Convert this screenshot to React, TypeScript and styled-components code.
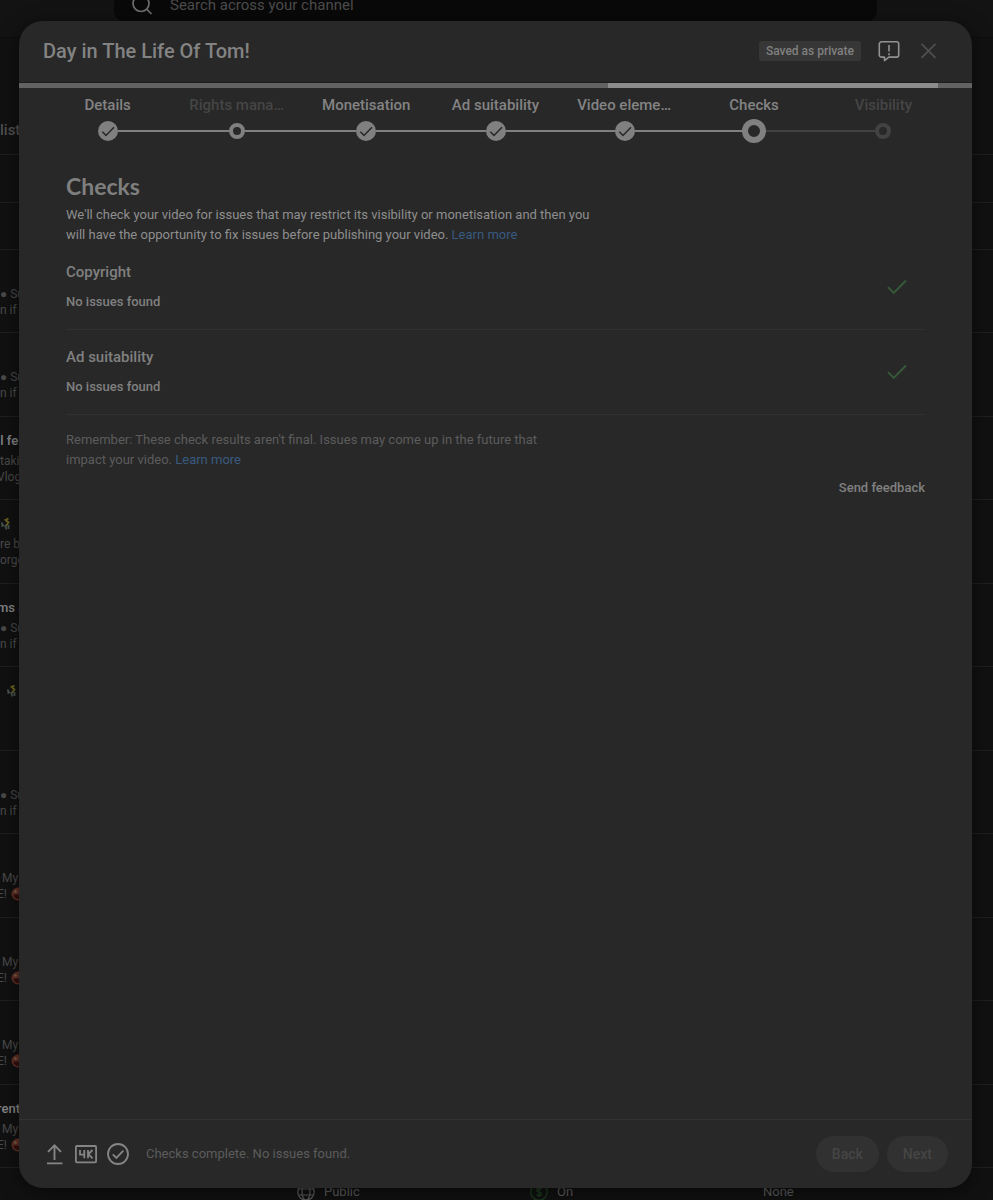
import React from "react";
import styled, { createGlobalStyle, css } from "styled-components";

const GlobalStyle = createGlobalStyle`
  * { box-sizing: border-box; }
  body { margin: 0; background: #111111; font-family: Roboto, "Liberation Sans", sans-serif; }
  h1, h2, h3, p, ol, ul { margin: 0; padding: 0; }
  ol, ul { list-style: none; }
  button { font-family: inherit; border: 0; padding: 0; background: none; cursor: pointer; }
  a { text-decoration: none; }
`;

const Screen = styled.div`
  position: relative;
  height: 100vh;
  min-height: 640px;
  overflow: hidden;
`;

/* Channel page behind the dialog */

const TopBar = styled.header`
  height: 38px;
  padding: 0 116px 0 114px;
  background: #131313;
  border-bottom: 1px solid #0d0d0d;
`;

const SearchBox = styled.label`
  display: flex;
  align-items: center;
  gap: 16px;
  height: 22px;
  padding: 0 0 12px 16px;
  background: #090909;
  border-radius: 0 0 12px 12px;
  svg { flex: none; }
`;

const SearchInput = styled.input`
  flex: 1;
  height: 20px;
  padding: 0;
  border: 0;
  outline: 0;
  background: transparent;
  color: #4c4c4c;
  font: 400 15px/20px Roboto, sans-serif;
  &::placeholder { color: #4c4c4c; opacity: 1; }
`;

const TabStrip = styled.div`
  height: 117px;
  padding-top: 82px;
  border-bottom: 1px solid #1f1f1f;
  color: #505050;
  font-size: 15px;
  font-weight: 500;
  line-height: 20px;
`;

const Band = styled.div<{ $height: number }>`
  height: ${(p) => p.$height}px;
  border-bottom: 1px solid #1f1f1f;
`;

const VideoRow = styled.li`
  height: 83px;
  padding-top: 13px;
  border-bottom: 1px solid #1f1f1f;
  color: #4a4a4a;
  font-size: 12px;
  line-height: 16px;
  white-space: nowrap;
  overflow: hidden;
  &:nth-child(even) { height: 84px; }
`;

const VideoTitle = styled.div`
  display: flex;
  align-items: center;
  height: 22px;
  margin: 0 0 1px -3px;
  color: #858585;
  font-size: 13px;
  font-weight: 500;
`;

const Snippet = styled.div<{ $shift: number }>`
  display: flex;
  align-items: center;
  gap: 4px;
  height: 16px;
  margin-left: ${(p) => p.$shift}px;
`;

const StatusRow = styled.div`
  display: grid;
  grid-template-columns: 233fr 233fr 230fr;
  padding: 14px 0 0 297px;
  color: #5c5c5c;
  font-size: 13px;
  line-height: 20px;
`;

const StatusCell = styled.span`
  display: flex;
  align-items: center;
  gap: 9px;
`;

/* Upload dialog */

const Overlay = styled.div`
  position: absolute;
  inset: 0;
  display: flex;
  padding: 21px 21px 12px 19px;
`;

const Dialog = styled.section`
  display: flex;
  flex: 1;
  flex-direction: column;
  min-width: 0;
  overflow: hidden;
  border-radius: 24px;
  background: #282828;
  box-shadow: 0 4px 20px rgba(0, 0, 0, 0.5);
`;

const DialogHeader = styled.header`
  display: flex;
  align-items: center;
  gap: 16px;
  height: 62px;
  flex: none;
  padding: 0 31px 2px 24px;
  border-bottom: 1px solid #1d1d1d;
`;

const Title = styled.h1`
  flex: 1;
  color: #838383;
  font-size: 20px;
  font-weight: 500;
  line-height: 28px;
`;

const Badge = styled.span`
  padding: 0 7px;
  border-radius: 3px;
  background: #373737;
  color: #808080;
  font-size: 12px;
  font-weight: 500;
  line-height: 20px;
`;

const IconButton = styled.button`
  display: flex;
  width: 24px;
  height: 24px;
`;

const Progress = styled.div`
  display: grid;
  grid-template-columns: 589fr 330fr 34fr;
  flex: none;
  height: 5px;
  background: #626262;
`;

const ProgressFill = styled.span`
  grid-column: 2;
  background: #8c8c8c;
`;

const Steps = styled.ol`
  display: grid;
  grid-template-columns: repeat(7, minmax(0, 1fr));
  flex: none;
  padding: 7px 24px 0;
`;

type StepState = "done" | "skipped" | "current" | "locked";

const StepButton = styled.button<{ $dim: boolean }>`
  display: block;
  width: 100%;
  color: ${(p) => (p.$dim ? "#454545" : "#838383")};
  font-size: 15px;
  font-weight: 500;
  line-height: 20px;
`;

const StepLabel = styled.span`
  display: block;
  margin: 0 17px;
  overflow: hidden;
  text-overflow: ellipsis;
  white-space: nowrap;
`;

const Track = styled.span`
  display: flex;
  align-items: center;
  height: 24px;
  margin-top: 4px;
`;

const Rail = styled.span<{ $tone: "none" | "lit" | "dim" }>`
  flex: 1;
  height: 2px;
  background: ${(p) => ({ none: "transparent", lit: "#808080", dim: "#424242" })[p.$tone]};
`;

const Ring = styled.span<{ $state: StepState }>`
  flex: none;
  border-radius: 50%;
  ${(p) =>
    p.$state === "current"
      ? css`width: 24px; height: 24px; border: 6px solid #808080;`
      : css`width: 16px; height: 16px; border: 4px solid ${p.$state === "locked" ? "#424242" : "#808080"};`}
`;

const Body = styled.main`
  flex: 1;
  min-height: 0;
  overflow: hidden;
  padding: 27px 47px 0;
`;

const Heading = styled.h2`
  color: #7f7f7f;
  font-family: Lato, sans-serif;
  font-size: 23px;
  font-weight: 700;
  line-height: 32px;
`;

const Paragraph = styled.p<{ $muted?: boolean }>`
  max-width: ${(p) => (p.$muted ? 500 : 536)}px;
  margin-top: ${(p) => (p.$muted ? 15 : 3)}px;
  color: ${(p) => (p.$muted ? "#5c5c5c" : "#8e8e8e")};
  font-size: 13px;
  font-weight: 400;
  line-height: 20px;
`;

const Link = styled.a`
  color: #385a80;
`;

const CheckRow = styled.section`
  display: flex;
  align-items: center;
  justify-content: space-between;
  height: 85px;
  padding-right: 16px;
  border-bottom: 1px solid #313131;
`;

const CheckTitle = styled.h3`
  color: #808080;
  font-size: 15px;
  font-weight: 500;
  line-height: 20px;
`;

const CheckResult = styled.p`
  margin-top: 10px;
  color: #808080;
  font-size: 13px;
  font-weight: 500;
  line-height: 20px;
`;

const FeedbackRow = styled.div`
  display: flex;
  justify-content: flex-end;
  margin-top: 8px;
`;

const FeedbackButton = styled.button`
  color: #808080;
  font-size: 13px;
  font-weight: 500;
  line-height: 20px;
`;

const DialogFooter = styled.footer`
  display: flex;
  align-items: center;
  gap: 8px;
  flex: none;
  height: 69px;
  padding: 0 24px 0 23px;
  border-top: 1px solid #313131;
`;

const FooterStatus = styled.p`
  flex: 1;
  padding-left: 8px;
  color: #5c5c5c;
  font-size: 13px;
  line-height: 20px;
`;

const PillButton = styled.button`
  height: 36px;
  padding: 0 16px;
  border-radius: 18px;
  background: #313131;
  color: #454545;
  font-size: 14px;
  font-weight: 500;
`;

/* Icons */

const SearchIcon = () => (
  <svg width="24" height="24" viewBox="0 0 24 24" fill="none" stroke="#6e6e6e" strokeWidth="1.7">
    <circle cx="11" cy="10.500" r="8" />
    <path d="M16.700 16.200 21.500 21" />
  </svg>
);

const FeedbackIcon = () => (
  <svg width="24" height="24" viewBox="0 0 24 24" fill="none" stroke="#929292" strokeWidth="1.6">
    <path d="M4.500 2.800h15a2.200 2.200 0 0 1 2.200 2.200v10.900a2.200 2.200 0 0 1-2.200 2.200h-7.600l-4.400 3.500v-3.500H4.500a2.200 2.200 0 0 1-2.200-2.200V5a2.200 2.200 0 0 1 2.200-2.200Z" strokeLinejoin="round" />
    <path d="M12 6v6.500M12 14.200v2" />
  </svg>
);

const CloseIcon = () => (
  <svg width="24" height="24" viewBox="0 0 24 24" fill="none" stroke="#505050" strokeWidth="1.7">
    <path d="m4.500 4.800 14 14M18.500 4.800l-14 14" />
  </svg>
);

const StepCheck = () => (
  <svg width="20" height="20" viewBox="0 0 20 20" fill="none">
    <circle cx="10" cy="10" r="10" fill="#808080" />
    <path d="m4.300 10.700 3.700 3.700 8-8.200" stroke="#282828" strokeWidth="1.5" />
  </svg>
);

const GreenCheck = () => (
  <svg width="24" height="24" viewBox="0 0 24 24" fill="none" stroke="#375a39" strokeWidth="1.9" role="img" aria-label="Passed">
    <path d="m3 12.200 5.700 5.700L21 5.500" />
  </svg>
);

const UploadIcon = () => (
  <svg width="24" height="24" viewBox="0 0 24 24" fill="none" stroke="#858585" strokeWidth="1.9">
    <path d="M12.500 18V3.500M6 9.800l6.500-6.500 6.500 6.500M5 21.400h15.500" />
  </svg>
);

const FourKIcon = () => (
  <svg width="24" height="24" viewBox="0 0 24 24" fill="none" stroke="#858585" strokeWidth="1.8">
    <rect x="1.900" y="4" width="20.200" height="16.300" rx="1" />
    <path d="M6 8v4.600h4.500M10.300 8v8.200M14 8v8.200M18.500 8l-4 4.100 4 4.200" />
  </svg>
);

const CircleCheckIcon = () => (
  <svg width="24" height="24" viewBox="0 0 24 24" fill="none" stroke="#858585" strokeWidth="1.8">
    <circle cx="12" cy="12" r="10" />
    <path d="m6.800 12.300 3.600 3.600 7-7.300" />
  </svg>
);

const GlobeIcon = () => (
  <svg width="18" height="18" viewBox="0 0 18 18" fill="none" stroke="#5c5c5c" strokeWidth="1.200">
    <circle cx="9" cy="9" r="8.200" />
    <ellipse cx="9" cy="9" rx="4" ry="8.200" />
    <path d="M1.500 6h15M1.500 12h15" />
  </svg>
);

const DollarIcon = () => (
  <svg width="18" height="18" viewBox="0 0 18 18" fill="none" stroke="#1c3a1e" strokeWidth="1.400">
    <circle cx="9" cy="9" r="8.200" />
    <path d="M11.500 6.500C10.500 5 6.800 5.100 6.800 7.200c0 2.300 4.700 1.300 4.700 3.700 0 2-3.900 2.200-5 .5M9 4v10" />
  </svg>
);

const SpriteIcon = ({ shift }: { shift: number }) => (
  <svg width={12 + shift} height="14" viewBox={`${-shift} 0 ${12 + shift} 14`} fill="none" strokeWidth="1.800">
    <path d="M8.500 1.500 5.500 3l3 2.500L6 9" stroke="#6c6324" />
    <path d="M1.500 5.500 3 8.500l-1.500 1M5 8l1.500 4.500M8.500 8v4" stroke="#46534b" />
  </svg>
);

const FaceIcon = () => (
  <svg width="14" height="14" viewBox="0 0 14 14">
    <circle cx="7" cy="7" r="6.500" fill="#633025" />
    <path d="M2.500 7.500h9a4.500 4.500 0 0 1-9 0Z" fill="#30100f" />
    <circle cx="4.500" cy="4.500" r="1.300" fill="#7d6550" />
    <circle cx="9.500" cy="4.500" r="1.300" fill="#7d6550" />
  </svg>
);

interface Video {
  title?: string;
  sprite?: number;
  lines?: [string, string];
  face?: boolean;
  shift?: number;
}

const videos: Video[] = [
  { lines: ["● Su", "n if"] },
  { lines: ["● Su", "n if"] },
  { title: "ll fell", lines: ["taki", "Vlog"], shift: -3 },
  { sprite: 3, lines: ["re be", "orge"] },
  { title: "ms &", lines: ["● Su", "n if"] },
  { sprite: 9 },
  { lines: ["● Su", "n if"] },
  { lines: ["My", "E!"], face: true, shift: -3 },
  { lines: ["My", "E!"], face: true, shift: -3 },
  { lines: ["My", "E!"], face: true, shift: -3 },
  { title: "rent", lines: ["My", "E!"], face: true, shift: -3 },
];

const steps: { label: string; state: StepState }[] = [
  { label: "Details", state: "done" },
  { label: "Rights management", state: "skipped" },
  { label: "Monetisation", state: "done" },
  { label: "Ad suitability", state: "done" },
  { label: "Video elements", state: "done" },
  { label: "Checks", state: "current" },
  { label: "Visibility", state: "locked" },
];

const checks = ["Copyright", "Ad suitability"];

export default function App() {
  return (
    <Screen>
      <GlobalStyle />
      <TopBar>
        <SearchBox>
          <SearchIcon />
          <SearchInput aria-label="Search" placeholder="Search across your channel" />
        </SearchBox>
      </TopBar>
      <TabStrip>list</TabStrip>
      <Band $height={48} />
      <Band $height={47} />
      <ul>
        {videos.map((v, i) => (
          <VideoRow key={i}>
            <VideoTitle>
              {v.title}
              {v.sprite !== undefined && <SpriteIcon shift={v.sprite} />}
            </VideoTitle>
            {v.lines && (
              <>
                <Snippet $shift={v.face ? 2 : 0}>{v.lines[0]}</Snippet>
                <Snippet $shift={v.shift ?? 0}>
                  {v.lines[1]}
                  {v.face && <FaceIcon />}
                </Snippet>
              </>
            )}
          </VideoRow>
        ))}
      </ul>
      <StatusRow>
        <StatusCell><GlobeIcon />Public</StatusCell>
        <StatusCell><DollarIcon />On</StatusCell>
        <StatusCell>None</StatusCell>
      </StatusRow>

      <Overlay>
        <Dialog role="dialog" aria-labelledby="dialog-title">
          <DialogHeader>
            <Title id="dialog-title">Day in The Life Of Tom!</Title>
            <Badge>Saved as private</Badge>
            <IconButton aria-label="Send feedback"><FeedbackIcon /></IconButton>
            <IconButton aria-label="Close"><CloseIcon /></IconButton>
          </DialogHeader>
          <Progress><ProgressFill /></Progress>
          <Steps>
            {steps.map((s, i) => (
              <li key={s.label}>
                <StepButton $dim={s.state === "skipped" || s.state === "locked"}>
                  <StepLabel>{s.label}</StepLabel>
                  <Track>
                    <Rail $tone={i === 0 ? "none" : s.state === "locked" ? "dim" : "lit"} />
                    {s.state === "done" ? <StepCheck /> : <Ring $state={s.state} />}
                    <Rail $tone={i === steps.length - 1 ? "none" : s.state === "current" ? "dim" : "lit"} />
                  </Track>
                </StepButton>
              </li>
            ))}
          </Steps>
          <Body>
            <Heading>Checks</Heading>
            <Paragraph>
              We'll check your video for issues that may restrict its visibility or monetisation and then you will
              have the opportunity to fix issues before publishing your video. <Link href="#">Learn more</Link>
            </Paragraph>
            {checks.map((name) => (
              <CheckRow key={name}>
                <div>
                  <CheckTitle>{name}</CheckTitle>
                  <CheckResult>No issues found</CheckResult>
                </div>
                <GreenCheck />
              </CheckRow>
            ))}
            <Paragraph $muted>
              Remember: These check results aren't final. Issues may come up in the future that impact your video.{" "}
              <Link href="#">Learn more</Link>
            </Paragraph>
            <FeedbackRow><FeedbackButton>Send feedback</FeedbackButton></FeedbackRow>
          </Body>
          <DialogFooter>
            <UploadIcon />
            <FourKIcon />
            <CircleCheckIcon />
            <FooterStatus>Checks complete. No issues found.</FooterStatus>
            <PillButton>Back</PillButton>
            <PillButton>Next</PillButton>
          </DialogFooter>
        </Dialog>
      </Overlay>
    </Screen>
  );
}
